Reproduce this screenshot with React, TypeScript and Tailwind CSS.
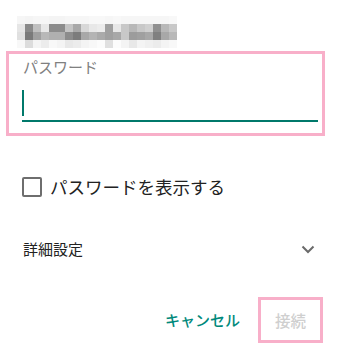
import React from "react";

const rows: string[][] = [
  ["f6","f4","f6","f6","f4","f4","f6","f6","f6","f8","f8","f6","f8","f6","f6","f6","f6","f6","f6","f8"],
  ["e6","8a","c0","e8","8c","8c","c4","a8","d8","e8","ec","a0","e8","c8","b8","c8","d0","90","b8","c8"],
  ["e0","7a","a0","b8","b0","b0","8c","7c","a8","b4","aa","a0","a8","c8","9c","a0","a8","80","a8","b8"],
  ["f8","dc","f4","ec","f8","f4","e8","ec","f4","f8","fc","e0","fc","f4","e8","f4","f0","ec","f4","f8"],
];

function Mosaic() {
  return (
    <svg width="160" height="32" viewBox="0 0 160 32" shapeRendering="crispEdges">
      {rows.map((r, y) =>
        r.map((c, x) => (
          <rect key={`${x}-${y}`} x={x * 8} y={y * 8} width="8" height="8" fill={`#${c}${c}${c}`} />
        ))
      )}
    </svg>
  );
}

export default function App() {
  const font = { fontFamily: '"Noto Sans CJK JP", Roboto, "Noto Sans", sans-serif' };
  return (
    <div className="w-[337px] h-[348px] bg-white overflow-hidden flex flex-col" style={font}>
      <div className="h-[51px] pt-[16px] pl-[17px]">
        <Mosaic />
      </div>
      <div className="ml-[6px] w-[319px] h-[85px] border-[3px] border-[#f8afc9] flex flex-col">
        <div className="pl-[14px] pt-[3px] text-[15px] leading-[20px] text-[#808080]">パスワード</div>
        <div className="ml-[13px] w-[296px] mt-[13px] flex flex-col">
          <div className="w-[2px] h-[26px] bg-[#00796b]" />
          <div className="mt-[4px] h-[2px] bg-[#00796b]" />
        </div>
      </div>
      <div className="mt-[41px] h-[20px] flex items-center pl-[22px]">
        <div className="w-[20px] h-[20px] border-2 border-[#6e6e6e] rounded-[2px] box-border" />
        <span className="ml-[8px] text-[17.5px] leading-[20px] text-[#222]">パスワードを表示する</span>
      </div>
      <div className="mt-[40px] h-[24px] flex items-center justify-between pl-[23px] pr-[22px]">
        <span className="text-[15px] leading-[20px] text-[#222]">詳細設定</span>
        <svg width="14" height="9" viewBox="0 0 14 9">
          <path d="M1.5 1.5 L7 7 L12.5 1.5" fill="none" stroke="#6a6a6a" strokeWidth="2" />
        </svg>
      </div>
      <div className="mt-[36px] flex items-center justify-end pr-[14px]">
        <span className="text-[15px] leading-[20px] font-medium text-[#00897b]">キャンセル</span>
        <div className="ml-[18px] w-[65px] h-[46px] border-[3px] border-[#f8afc9] flex items-center justify-center">
          <span className="text-[15.5px] leading-[20px] font-medium text-[#cfcfcf]">接続</span>
        </div>
      </div>
    </div>
  );
}
